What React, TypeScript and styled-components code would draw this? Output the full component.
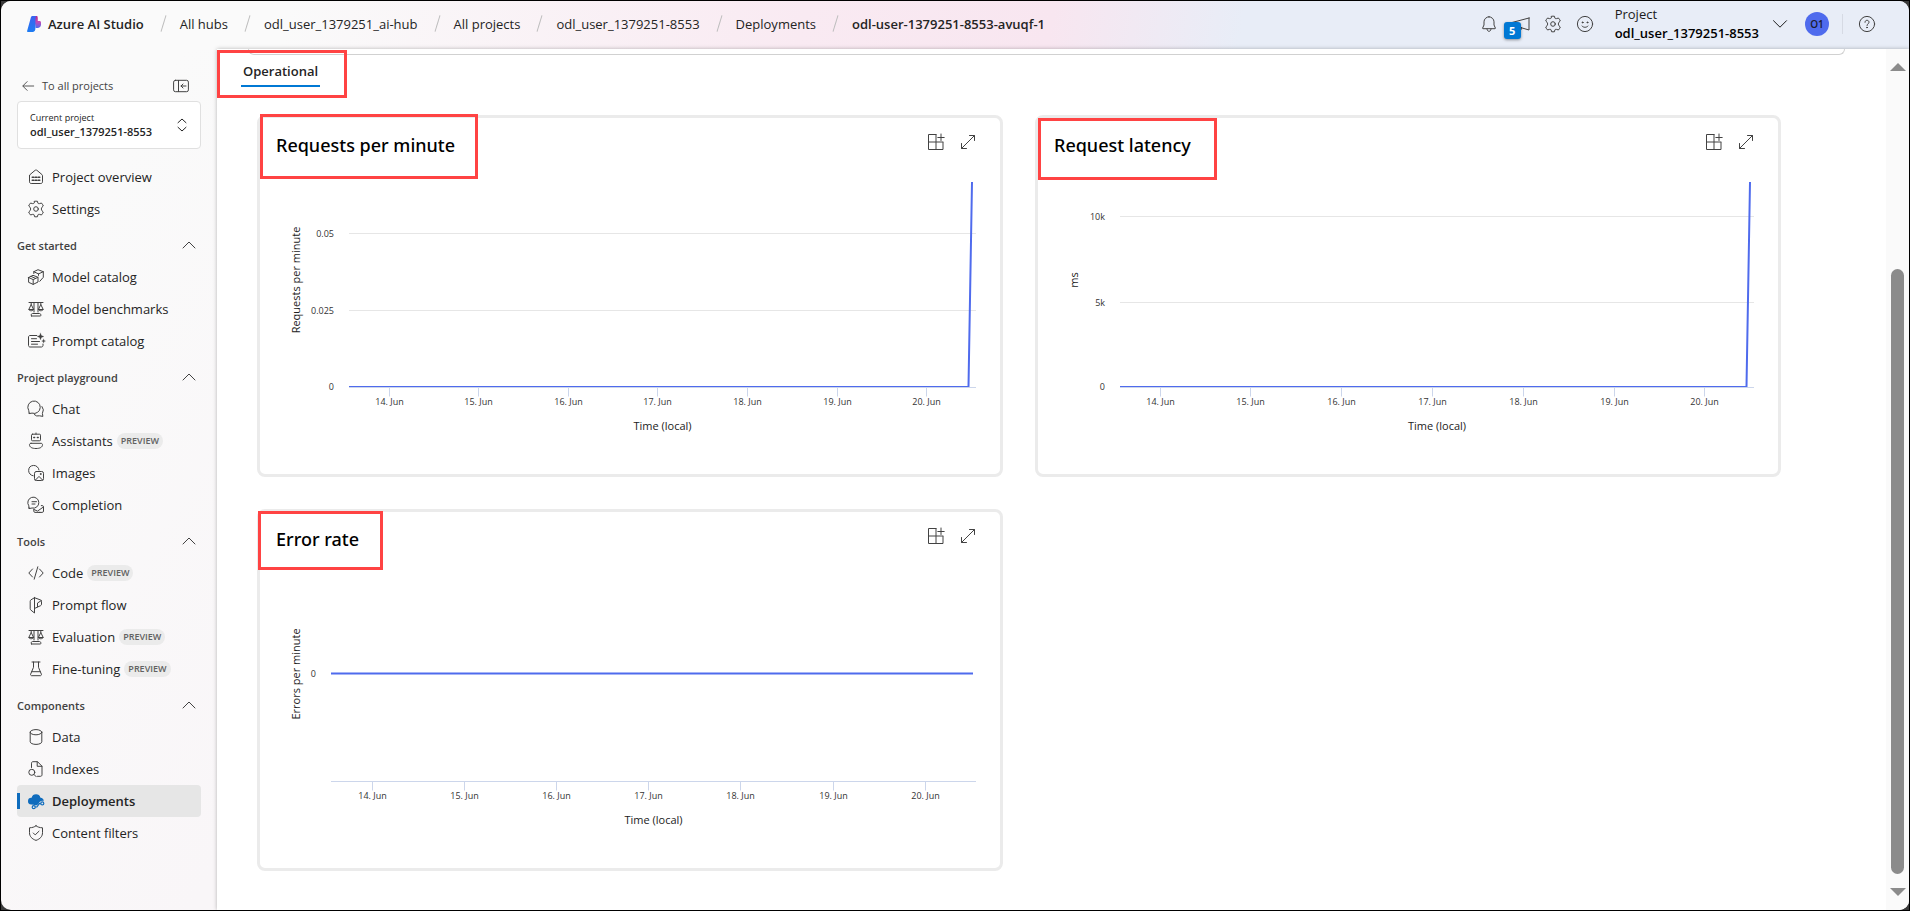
import React from "react";
import styled, { createGlobalStyle, css } from "styled-components";

const GlobalStyle = createGlobalStyle`
  *, *::before, *::after { box-sizing: border-box; }
  body {
    margin: 0;
    background: #2b2b2b;
    color: #242424;
    font-family: "Open Sans", "Noto Sans", sans-serif;
    font-size: 13px;
    line-height: 20px;
  }
  button { font: inherit; color: inherit; background: none; border: 0; padding: 0; cursor: pointer; }
  a { color: inherit; text-decoration: none; }
  ul, ol { list-style: none; margin: 0; padding: 0; }
  h1, h2, h3 { margin: 0; font: inherit; }
`;

/* ---------- icons ---------- */

type IconName =
  | "bell" | "megaphone" | "gear" | "smile" | "help" | "chevronDown" | "chevronUp" | "arrowLeft"
  | "collapse" | "updown" | "home" | "cubes" | "scales" | "promptCatalog" | "chat" | "bot"
  | "images" | "completion" | "code" | "flow" | "flask" | "data" | "indexes" | "deploy" | "shield"
  | "boardAdd" | "expand";

const gearPath =
  "M6.500 .3Q8 0 9.500 .3L9.900 2.200Q10.600 2.900 11.600 2.600L13.400 2Q14.600 3.200 15.300 5L13.900 6.300Q13.400 7 13.400 8T13.900 9.700L15.300 11Q14.600 12.800 13.400 14L11.600 13.400Q10.600 13.100 9.900 13.800L9.500 15.700Q8 16 6.500 15.700L6.100 13.800Q5.400 13.100 4.400 13.400L2.600 14Q1.400 12.800 .7 11L2.100 9.700Q2.600 9 2.600 8T2.100 6.300L.7 5Q1.400 3.200 2.600 2L4.400 2.600Q5.400 2.900 6.100 2.200Z";

const glyphs: Record<IconName, React.ReactNode> = {
  bell: <><path d="M8 .8a5 5 0 0 0-5 5V9l-1.400 3.100c-.1.300.1.600.4.600h12c.300 0 .5-.3.4-.6L13 9V5.800a5 5 0 0 0-5-5Z" /><path d="M6 13c.2 1.500.9 2.300 2 2.300s1.800-.8 2-2.300" /></>,
  megaphone: <path d="M16 2v12L-1 9V6.500L16 2ZM4 10.500v2c0 1 1 2 2.200 2S8.500 13.500 8.500 12.500v-1" />,
  gear: <><path d={gearPath} /><circle cx="8" cy="8" r="2.300" /></>,
  smile: <><circle cx="8" cy="8" r="7.600" /><path d="M5 10c1.500 1.800 4.500 1.800 6 0" /><circle cx="5.600" cy="6.400" r=".5" fill="currentColor" /><circle cx="10.400" cy="6.400" r=".5" fill="currentColor" /></>,
  help: <><circle cx="8" cy="8" r="7.600" /><path d="M6 6.300c0-1.300.9-2 2-2s2 .8 2 1.900c0 1.500-2 1.700-2 3.300" /><circle cx="8" cy="11.500" r=".4" fill="currentColor" /></>,
  chevronDown: <path d="m1.500 4.700 6.500 6.500 6.500-6.500" />,
  chevronUp: <path d="M2 10 8 4l6 6" />,
  arrowLeft: <path d="M14.500 8H2.500M7 3 2 8l5 5" />,
  collapse: <><rect x=".6" y="2.300" width="14.800" height="11.400" rx="1.800" /><path d="M5.500 2.500v11M13 8H8M10 6 8 8l2 2" /></>,
  updown: <path d="M4 5.700 8 2l4 3.700M4 10.300 8 14l4-3.700" />,
  home: <><path d="M1.500 6.800c0-.6.200-1 .6-1.300L7 1.400c.6-.5 1.400-.5 2 0l4.900 4.100c.4.300.6.700.6 1.300v6c0 1-.7 1.700-1.700 1.700H3.200c-1 0-1.700-.7-1.700-1.700v-6Z" /><path d="M4.200 8.300h1.600M7.200 8.300h1.600M10.200 8.300h1.600M4.200 11.300h1.600M7.200 11.300h1.600M10.200 11.300h1.600" strokeWidth="1.500" /></>,
  cubes: <><path d="M.6 8.500 5 6.300l5 2V13l-4.800 2.400L.6 13.300V8.500Zm0 0L5.200 10.600 10 8.300M5.200 10.600v4.800M3 7.400l4.600 2" /><path d="M5.800 4.500V2.700L10 .7l5.300 2v5.600l-3.500 4M5.800 2.700l4.700 2.200 4.800-2.200M10.500 4.900v1.500" /></>,
  scales: <><path d="M1 1.500h14M6 1.500v9.500M10 1.500v9.500M3.200 1.500v2L.8 8.500h4.800L3.200 3.500M12.800 1.500v2l-2.400 5h4.800l-2.400-5" /><path d="M.8 8.500c.5 1.800 4.300 1.800 4.800 0M10.400 8.500c.5 1.800 4.300 1.800 4.800 0M3.500 15h9c.6 0 .6-2.500-1-2.500h-7c-1.600 0-1.600 2.500-1 2.500Z" /></>,
  promptCatalog: <><path d="M8.800 2.500H2C1.200 2.500.5 3.200.5 4v8.500c0 .8.700 1.500 1.500 1.500h11.500c.8 0 1.500-.7 1.500-1.500V11M3.500 5.700h5M3.500 8.500h8M3.500 11.200h6" /><path d="M12.500.2 13.400 2.600 15.800 3.500 13.400 4.400 12.500 6.800 11.600 4.400 9.200 3.500 11.600 2.600ZM15.600 6.200l.5 1.400 1.400.5-1.400.5-.5 1.400-.5-1.400-1.400-.5 1.400-.5Z" fill="currentColor" strokeWidth=".3" /></>,
  chat: <><path d="M1.200 12.200.7 9.400A6.200 6.200 0 1 1 4 12.100l-2.800.5v-.4Z" /><path d="M6.300 13.600a5 5 0 0 0 5.200 1.200l3.400.6-.5-3A6 6 0 0 0 14 5.500" /></>,
  bot: <><rect x="3.500" y="1.200" width="9" height="6.600" rx="1" /><path d="M8 0v1" /><path d="M5.800 4.500h.8M9.400 4.500h.8" strokeWidth="1.500" /><path d="M3 10.300h10c.9 0 1.500.6 1.500 1.400 0 2.500-2.500 3.800-6.500 3.800s-6.500-1.300-6.500-3.800c0-.8.6-1.400 1.500-1.400Z" /></>,
  images: <><path d="M5.200 10.800A5.200 5.200 0 1 1 11 5" /><rect x="6.500" y="6.500" width="9" height="9" rx="1.800" /><path d="m7.500 15 3.500-3.600 3.500 3.600" /><circle cx="12.600" cy="9" r=".5" /></>,
  completion: <><path d="M1 11 .8 8.800A5.500 5.500 0 1 1 4 11l-3 .6V11Z" /><path d="M4 4.700h4.500M4 7h3" /><path d="M11 15.400h3.200c.8 0 1.300-.5 1.300-1.300V9.800c0-.7-.5-1.200-1.200-1.200h-1M5.800 12.500v1.700c0 .7.500 1.200 1.200 1.200h5M6 12.500l3.500 1.600L15 10.300" /></>,
  code: <path d="M4.500 4 .8 8l3.700 4M11.500 4l3.700 4-3.700 4M9.800 1.800 6.200 14.200" />,
  flow: <><path d="M6.500 .7 3 2.800c-.5.300-.8.800-.8 1.400v7.600c0 .6.300 1.100.8 1.400L6.500 16V.7Z" /><path d="M6.500 .7 12.600 3c.5.200.9.700.9 1.300v3c0 .6-.3 1-.8 1.300L6.500 11.500M13.300 3.600 9.500 6v3.800" /></>,
  flask: <path d="M4 1h8M5.500 1v5.300L2.700 13c-.4.900.1 1.700 1 1.700h8.600c.9 0 1.400-.8 1-1.700l-2.800-6.700V1M3.800 10.700h8.400" />,
  data: <><ellipse cx="8" cy="3.200" rx="5.800" ry="2.600" /><path d="M2.200 3.200v9.600c0 1.400 2.600 2.600 5.800 2.600s5.800-1.200 5.800-2.600V3.200" /></>,
  indexes: <><path d="M3.500 6.500V2.200c0-.9.600-1.500 1.500-1.500h4.500l4.500 4.500v8.600c0 .9-.6 1.500-1.500 1.500H9.500M9.200.8v4.500H14" /><circle cx="3.800" cy="11.300" r="3" /><path d="m6 13.500 2.300 2.300" /></>,
  deploy: <><path d="M3.200 11.600A3.400 3.400 0 0 1 3.600 4.800 4.600 4.600 0 0 1 12.500 4.800 3.400 3.400 0 0 1 15.700 8l-1.500-.2c-1.500 0-2.700 1-3.100 2.200l-2 2.200H6.900l-1.400-.5Z" fill="currentColor" stroke="none" /><path d="M7.300 14h1.600l2.400-3.300h1.500" strokeWidth="1.200" /><circle cx="5.700" cy="14.200" r="1.500" fill="#e6e6e6" strokeWidth="1.200" /><circle cx="14.300" cy="10.400" r="1.500" fill="#e6e6e6" strokeWidth="1.200" /></>,
  shield: <><path d="M8 .8c1.700 1.300 3.700 1.900 6.500 2v4.900c0 3.700-2.300 6.200-6.500 7.700-4.200-1.500-6.500-4-6.500-7.700V2.800c2.800-.1 4.800-.7 6.500-2Z" /><path d="m5.300 8 1.900 1.900L11 6.200" /></>,
  boardAdd: <path d="M8 .5H.5v15H15V8.500M8 .5V15M.5 8H15M13 0v6.500M9.800 3.500h6.400" />,
  expand: <path d="M9.500 1.500h5v5M14.500 1.500l-13 13M6.500 14.500h-5v-5" />,
};

const Svg = styled.svg<{ $size: number }>`
  width: ${(p) => p.$size}px;
  height: ${(p) => p.$size}px;
  flex: none;
  display: block;
  overflow: visible;
  fill: none;
  stroke: currentColor;
  stroke-width: 1;
  stroke-linecap: round;
  stroke-linejoin: round;
`;

const Icon = ({ name, size = 16 }: { name: IconName; size?: number }) => (
  <Svg viewBox="0 0 16 16" $size={size} aria-hidden="true">{glyphs[name]}</Svg>
);

const Logo = () => (
  <svg width="14" height="16" viewBox="0 0 14 16" aria-hidden="true">
    <defs>
      <linearGradient id="lb" x1="0" y1="0" x2="0" y2="1"><stop offset="0" stopColor="#3c62f0" /><stop offset="1" stopColor="#1d7cf2" /></linearGradient>
      <linearGradient id="lp" x1="0" y1="0" x2="0" y2="1"><stop offset="0" stopColor="#b3268f" /><stop offset=".5" stopColor="#c24bb4" /><stop offset="1" stopColor="#4d6bf0" /></linearGradient>
    </defs>
    <path d="M7 0h3.200c.8 1.200.6 3 .6 5h1.700c.9 0 1.500.6 1.500 1.500v2C14 10.700 12.500 12 10.500 12H8.600Z" fill="url(#lp)" />
    <path d="M5.500 0h3.700c-.8 1-.8 3-.8 5v7.500c0 2-1 3.500-3 3.500H.8c-.6 0-.9-.5-.7-1L4 1c.2-.6.8-1 1.500-1Z" fill="url(#lb)" />
  </svg>
);

/* ---------- shell ---------- */

const Frame = styled.div`
  min-height: 100vh;
  display: flex;
  border: 1px solid #000;
  background: #3a3a3a;
`;

const Shell = styled.div`
  flex: 1;
  min-width: 0;
  display: flex;
  flex-direction: column;
  border-radius: 10px;
  overflow: hidden;
  background: linear-gradient(120deg, #fafafa 0, #fafafa 180px, #f9f6f8 620px);
`;

const TopBar = styled.header`
  height: 48px;
  flex: none;
  display: flex;
  align-items: center;
  justify-content: space-between;
  padding: 0 34px 3px 26px;
  background: linear-gradient(100deg, #fafafa 0%, #fafafa 15%, #f9eaf2 42%, #f8e6f0 55%, #e8edf7 65%, #e8edf7 100%);
`;

const Crumbs = styled.ol`
  display: flex;
  align-items: center;
  li { display: flex; align-items: center; white-space: nowrap; }
  li + li::before {
    content: "";
    width: 1px;
    height: 17px;
    margin: 0 16px 0 19px;
    background: #bdbdbd;
    transform: rotate(17deg);
  }
`;

const Crumb = styled.a<{ $strong?: boolean }>`
  display: flex;
  align-items: center;
  gap: 7px;
  font-weight: ${(p) => (p.$strong ? 600 : 400)};
`;

const Tools = styled.div`
  display: flex;
  align-items: center;
  gap: 16px;
  color: #424242;
`;

const ToolButton = styled.button`
  position: relative;
  display: block;
`;

const Count = styled.span`
  position: absolute;
  left: -9px;
  top: 6px;
  width: 17px;
  height: 17px;
  border-radius: 3px;
  background: #0078d4;
  color: #fff;
  font-size: 11px;
  font-weight: 700;
  line-height: 17px;
  text-align: center;
  box-shadow: 0 1px 3px rgba(0, 0, 0, 0.4);
`;

const ProjectSwitch = styled.button`
  display: flex;
  align-items: center;
  gap: 13px;
  margin: 0 1px 0 6px;
  text-align: left;
  color: #1b1b1b;
  line-height: 19px;
  strong { display: block; font-weight: 600; color: #000; }
`;

const Avatar = styled.button`
  width: 24px;
  height: 24px;
  border-radius: 50%;
  background: #4f6bed;
  color: #1b1b2e;
  font-size: 10px;
  font-weight: 600;
  line-height: 24px;
`;

const Divider = styled.span`
  width: 1px;
  height: 20px;
  margin-left: -3px;
  background: #d6dae4;
`;

const Body = styled.div`
  flex: 1;
  display: flex;
`;

/* ---------- side navigation ---------- */

const Side = styled.nav`
  width: 216px;
  flex: none;
  padding: 24px 16px 24px 16px;
`;

const SideTop = styled.div`
  display: flex;
  align-items: center;
  justify-content: space-between;
  padding: 3px 12px 5px 4px;
  font-size: 11px;
  color: #424242;
  a { display: flex; align-items: center; gap: 7px; }
`;

const ProjectBox = styled.button`
  width: 100%;
  height: 48px;
  display: flex;
  align-items: center;
  justify-content: space-between;
  padding: 0 10px 0 12px;
  border: 1px solid #e0e0e0;
  border-radius: 4px;
  background: #fff;
  text-align: left;
  font-size: 9px;
  line-height: 14px;
  strong { display: block; font-size: 11px; font-weight: 600; }
`;

const NavList = styled.ul<{ $first?: boolean }>`
  ${(p) => p.$first && css`margin-top: 12px;`}
`;

const SectionHead = styled.button`
  width: 100%;
  height: 36px;
  display: flex;
  align-items: center;
  justify-content: space-between;
  padding: 6px 4px 0 0;
  font-size: 11px;
  font-weight: 600;
  color: #424242;
`;

const NavLink = styled.a<{ $active?: boolean }>`
  position: relative;
  height: 32px;
  display: flex;
  align-items: center;
  gap: 8px;
  padding-left: 11px;
  border-radius: 4px;
  color: #242424;
  svg { color: #424242; }
  ${(p) => p.$active && css`
    background: #e6e6e6;
    font-weight: 600;
    svg { color: #0f6cbd; }
    &::before {
      content: "";
      position: absolute;
      left: 0;
      width: 3px;
      height: 16px;
      background: #0f6cbd;
    }
  `}
`;

const Preview = styled.span`
  height: 16px;
  margin-left: -4px;
  padding: 0 4px;
  border-radius: 8px;
  background: #ebebeb;
  color: #616161;
  font-size: 9px;
  font-weight: 600;
  line-height: 16px;
`;

type Item = { icon: IconName; label: string; preview?: boolean; active?: boolean };

const topItems: Item[] = [
  { icon: "home", label: "Project overview" },
  { icon: "gear", label: "Settings" },
];

const sections: { title: string; items: Item[] }[] = [
  { title: "Get started", items: [
    { icon: "cubes", label: "Model catalog" },
    { icon: "scales", label: "Model benchmarks" },
    { icon: "promptCatalog", label: "Prompt catalog" },
  ] },
  { title: "Project playground", items: [
    { icon: "chat", label: "Chat" },
    { icon: "bot", label: "Assistants", preview: true },
    { icon: "images", label: "Images" },
    { icon: "completion", label: "Completion" },
  ] },
  { title: "Tools", items: [
    { icon: "code", label: "Code", preview: true },
    { icon: "flow", label: "Prompt flow" },
    { icon: "scales", label: "Evaluation", preview: true },
    { icon: "flask", label: "Fine-tuning", preview: true },
  ] },
  { title: "Components", items: [
    { icon: "data", label: "Data" },
    { icon: "indexes", label: "Indexes" },
    { icon: "deploy", label: "Deployments", active: true },
    { icon: "shield", label: "Content filters" },
  ] },
];

const NavItems = ({ items, first }: { items: Item[]; first?: boolean }) => (
  <NavList $first={first}>
    {items.map((i) => (
      <li key={i.label}>
        <NavLink href="#" $active={i.active} aria-current={i.active ? "page" : undefined}>
          <Icon name={i.icon} />
          <span>{i.label}</span>
          {i.preview && <Preview>PREVIEW</Preview>}
        </NavLink>
      </li>
    ))}
  </NavList>
);

/* ---------- main area ---------- */

const Main = styled.main`
  flex: 1;
  min-width: 0;
  display: flex;
  background: #fff;
  box-shadow: 0 0 4px rgba(0, 0, 0, 0.28);
`;

const Content = styled.div`
  flex: 1;
  min-width: 0;
  padding: 0 105px 39px 40px;
`;

const PanelEdge = styled.div`
  height: 6px;
  margin: 0 -64px 0 -9px;
  border: 1px solid #d1d1d1;
  border-top: 0;
  border-radius: 0 0 8px 8px;
`;

const Tabs = styled.div`
  position: relative;
  height: 60px;
  margin-left: -16px;
  padding-top: 6px;
`;

const Tab = styled.button`
  height: 26px;
  padding: 0 2px 4px;
  border-bottom: 2px solid #0078d4;
  font-weight: 600;
  line-height: 20px;
`;

const Highlight = styled.span<{ $x: number; $y: number; $w: number; $h: number }>`
  position: absolute;
  left: ${(p) => p.$x}px;
  top: ${(p) => p.$y}px;
  width: ${(p) => p.$w}px;
  height: ${(p) => p.$h}px;
  border: 3px solid #ff4343;
  pointer-events: none;
`;

const Cards = styled.div`
  display: grid;
  grid-template-columns: 1fr 1fr;
  gap: 32px;
`;

const Card = styled.section`
  position: relative;
  border: 3px solid #ebebeb;
  border-radius: 8px;
`;

const CardHead = styled.div`
  height: 56px;
  display: flex;
  align-items: center;
  justify-content: space-between;
  padding: 0 24px 2px 16px;
  h2 {
    font-family: "Noto Sans", "Open Sans", sans-serif;
    font-size: 18px;
    font-weight: 500;
    line-height: 24px;
    color: #000;
  }
`;

const CardActions = styled.div`
  display: flex;
  gap: 16px;
  margin-bottom: 19px;
  margin-top: 12px;
  color: #424242;
`;

const Plot = styled.svg`
  display: block;
  width: 100%;
  height: auto;
  text { fill: #333; font-size: 9px; }
  .title { font-size: 11px; fill: #222; }
  .grid { stroke: #e6e6e6; }
  .axis { stroke: #ccd6eb; }
  .line { stroke: #4f6bed; stroke-width: 2; fill: none; stroke-linejoin: round; }
`;

type ChartSpec = {
  title: string;
  yTitle: string;
  left: number;
  yTicks: { label: string; y: number; grid?: boolean }[];
  firstTick: number;
  step: number;
  line: string;
  mark: [number, number, number, number];
};

const days = ["14. Jun", "15. Jun", "16. Jun", "17. Jun", "18. Jun", "19. Jun", "20. Jun"];
const plotRight = 716;
const axisY = 213.5;

const charts: ChartSpec[] = [
  {
    title: "Requests per minute", yTitle: "Requests per minute", left: 89,
    yTicks: [{ label: "0.05", y: 59.5, grid: true }, { label: "0.025", y: 136.5, grid: true }, { label: "0", y: 212.5 }],
    firstTick: 129, step: 89.6, line: "M89 213H708.500L712 8", mark: [0, -4, 218, 65],
  },
  {
    title: "Request latency", yTitle: "ms", left: 82,
    yTicks: [{ label: "10k", y: 42.5, grid: true }, { label: "5k", y: 128.5, grid: true }, { label: "0", y: 212.5 }],
    firstTick: 122, step: 90.8, line: "M82 213H708.500L712 8", mark: [0, 0, 179, 62],
  },
  {
    title: "Error rate", yTitle: "Errors per minute", left: 71,
    yTicks: [{ label: "0", y: 105.5 }],
    firstTick: 112, step: 92.2, line: "M71 105.500H713", mark: [-2, -1, 125, 59],
  },
];

const Chart = ({ c }: { c: ChartSpec }) => (
  <Card>
    <CardHead>
      <h2>{c.title}</h2>
      <CardActions>
        <ToolButton aria-label={`Pin ${c.title}`}><Icon name="boardAdd" /></ToolButton>
        <ToolButton aria-label={`Expand ${c.title}`}><Icon name="expand" /></ToolButton>
      </CardActions>
    </CardHead>
    <Plot viewBox="0 0 740 300" role="img" aria-label={c.title}>
      {c.yTicks.map((t) => (
        <g key={t.label}>
          {t.grid && <path className="grid" d={`M${c.left} ${t.y}H${plotRight}`} />}
          <text x={c.left - 15} y={t.y + 3} textAnchor="end">{t.label}</text>
        </g>
      ))}
      <path className="line" d={c.line} />
      <path className="axis" d={`M${c.left} ${axisY}H${plotRight}`} />
      {days.map((d, i) => {
        const x = Math.floor(c.firstTick + i * c.step) + 0.5;
        return (
          <g key={d}>
            <path className="axis" d={`M${x} ${axisY}v9`} />
            <text x={x} y={231} textAnchor="middle">{d}</text>
          </g>
        );
      })}
      <text className="title" x={(c.left + plotRight) / 2} y={256} textAnchor="middle">Time (local)</text>
      <text className="title" transform="translate(40 106) rotate(-90)" textAnchor="middle">{c.yTitle}</text>
    </Plot>
    <Highlight $x={c.mark[0]} $y={c.mark[1]} $w={c.mark[2]} $h={c.mark[3]} />
  </Card>
);

/* ---------- scroll bar ---------- */

const Scroll = styled.div`
  width: 23px;
  flex: none;
  display: flex;
  flex-direction: column;
  align-items: center;
  padding: 14px 0 14px;
  background: #fafafa;
`;

const Arrow = styled.span<{ $down?: boolean }>`
  border: 8px solid transparent;
  border-top-width: ${(p) => (p.$down ? 8 : 0)}px;
  border-bottom-width: ${(p) => (p.$down ? 0 : 8)}px;
  ${(p) => (p.$down ? "border-top-color" : "border-bottom-color")}: #8b8b8b;
`;

const Track = styled.div`
  flex: 1;
  width: 13px;
  margin: 7px 0 14px;
  display: flex;
  flex-direction: column;
  justify-content: flex-end;
`;

const Thumb = styled.div`
  height: 76%;
  border-radius: 7px;
  background: #8b8b8b;
`;

export default function App() {
  return (
    <>
      <GlobalStyle />
      <Frame>
        <Shell>
          <TopBar>
            <nav aria-label="Breadcrumb">
              <Crumbs>
                <li><Crumb href="#" $strong><Logo />Azure AI Studio</Crumb></li>
                <li><Crumb href="#">All hubs</Crumb></li>
                <li><Crumb href="#">odl_user_1379251_ai-hub</Crumb></li>
                <li><Crumb href="#">All projects</Crumb></li>
                <li><Crumb href="#">odl_user_1379251-8553</Crumb></li>
                <li><Crumb href="#">Deployments</Crumb></li>
                <li><Crumb href="#" $strong>odl-user-1379251-8553-avuqf-1</Crumb></li>
              </Crumbs>
            </nav>
            <Tools>
              <ToolButton aria-label="Notifications"><Icon name="bell" /></ToolButton>
              <ToolButton aria-label="Announcements"><Icon name="megaphone" /><Count>5</Count></ToolButton>
              <ToolButton aria-label="Settings"><Icon name="gear" /></ToolButton>
              <ToolButton aria-label="Feedback"><Icon name="smile" /></ToolButton>
              <ProjectSwitch>
                <span>Project<strong>odl_user_1379251-8553</strong></span>
                <Icon name="chevronDown" />
              </ProjectSwitch>
              <Avatar>O1</Avatar>
              <Divider />
              <ToolButton aria-label="Help"><Icon name="help" /></ToolButton>
            </Tools>
          </TopBar>
          <Body>
            <Side aria-label="Project">
              <SideTop>
                <a href="#"><Icon name="arrowLeft" size={14} />To all projects</a>
                <ToolButton aria-label="Collapse navigation"><Icon name="collapse" /></ToolButton>
              </SideTop>
              <ProjectBox>
                <span>Current project<strong>odl_user_1379251-8553</strong></span>
                <Icon name="updown" />
              </ProjectBox>
              <NavItems items={topItems} first />
              {sections.map((s) => (
                <div key={s.title}>
                  <SectionHead aria-expanded="true">{s.title}<Icon name="chevronUp" /></SectionHead>
                  <NavItems items={s.items} />
                </div>
              ))}
            </Side>
            <Main>
              <Content>
                <PanelEdge />
                <Tabs role="tablist">
                  <Tab role="tab" aria-selected="true">Operational</Tab>
                  <Highlight $x={-24} $y={-5} $w={130} $h={48} />
                </Tabs>
                <Cards>
                  {charts.map((c) => <Chart key={c.title} c={c} />)}
                </Cards>
              </Content>
              <Scroll aria-hidden="true">
                <Arrow />
                <Track><Thumb /></Track>
                <Arrow $down />
              </Scroll>
            </Main>
          </Body>
        </Shell>
      </Frame>
    </>
  );
}
